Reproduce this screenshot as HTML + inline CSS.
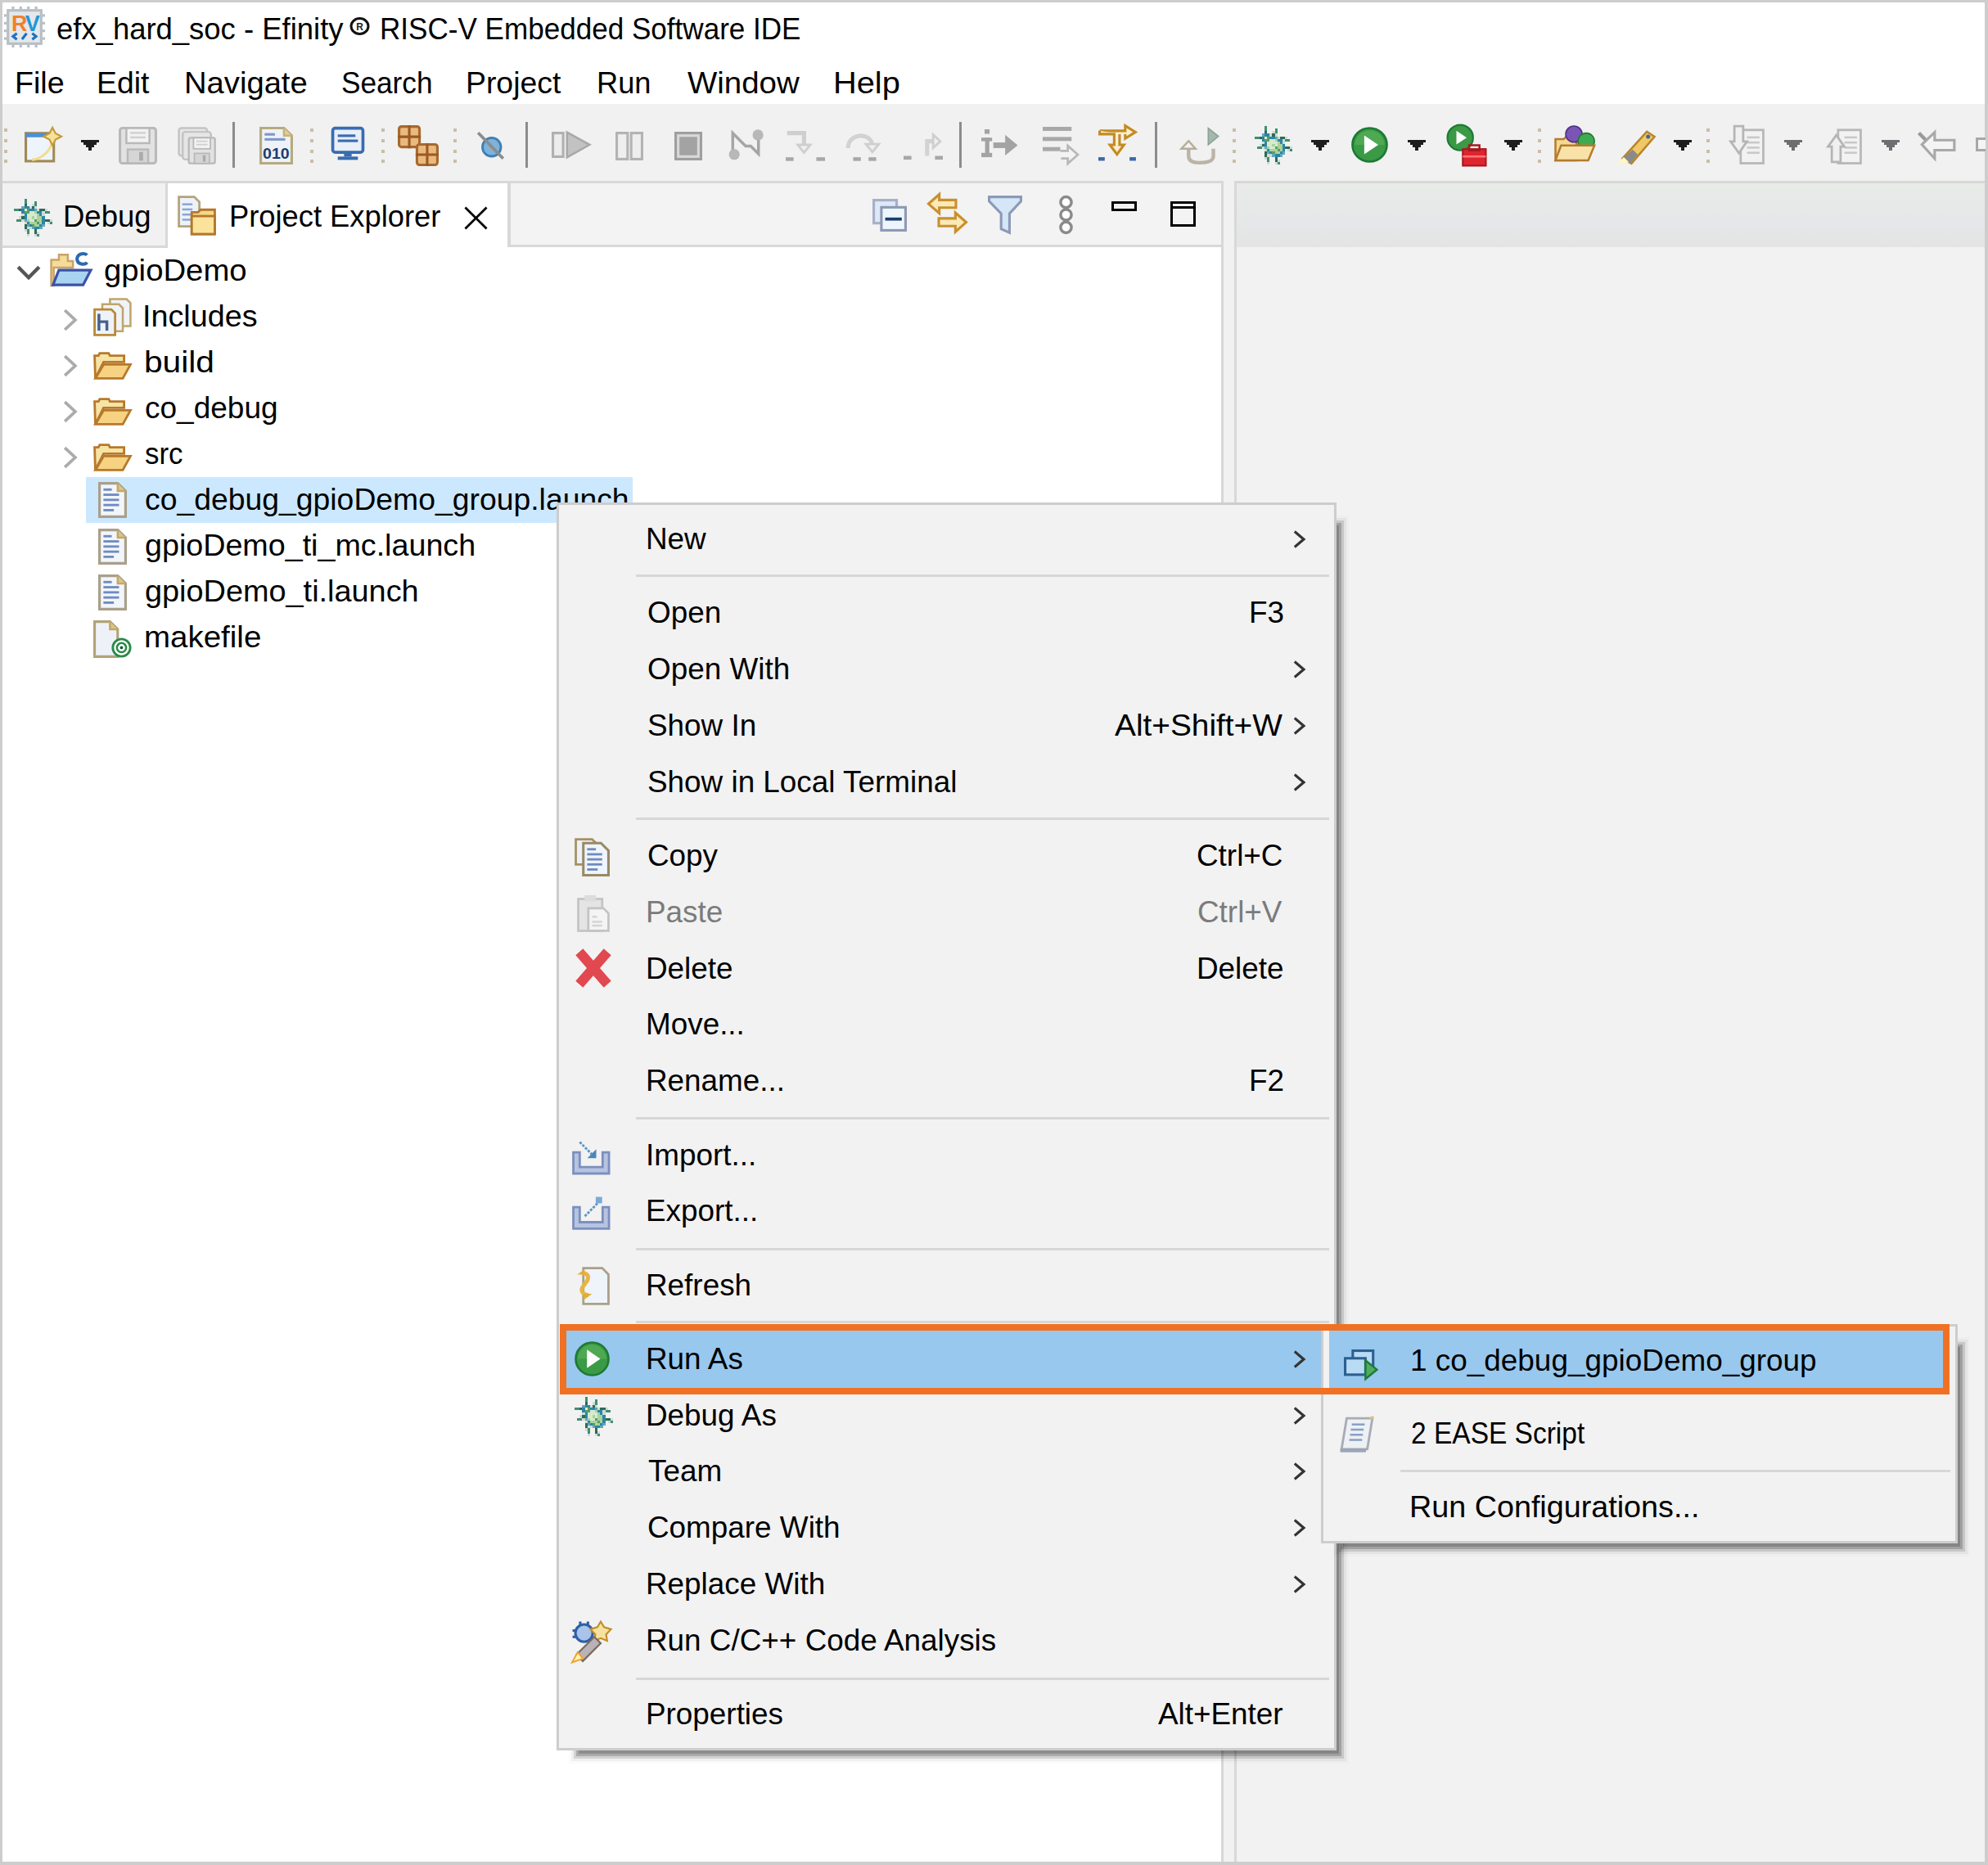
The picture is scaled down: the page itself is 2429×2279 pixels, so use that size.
<!DOCTYPE html>
<html><head><meta charset="utf-8"><style>
html,body{margin:0;padding:0;}
body{width:2429px;height:2279px;position:relative;overflow:hidden;background:#fff;font-family:"Liberation Sans",sans-serif;}
.r{position:absolute;}
.t{position:absolute;font-size:37px;line-height:38px;white-space:pre;transform-origin:0 0;}
svg{position:absolute;overflow:visible;}
</style></head><body>
<!-- window border -->
<div class="r" style="left:0;top:0;width:2429px;height:2279px;box-sizing:border-box;border:3px solid #cdcdcd;border-right-width:4px;border-bottom-width:4px;"></div>
<!-- toolbar -->
<div class="r" style="left:3px;top:127px;width:2422px;height:94px;background:#f1f1f1"></div>
<!-- gap areas between panels -->
<div class="r" style="left:3px;top:221px;width:2422px;height:2054px;background:#f1f1f1"></div>
<!-- left panel -->
<div class="r" style="left:3px;top:221px;width:1492px;height:2054px;background:#fff;box-sizing:border-box;border-top:3px solid #d8d8d8;border-right:3px solid #d8d8d8"></div>
<div class="r" style="left:3px;top:224px;width:1489px;height:78px;background:#f3f3f3;box-sizing:border-box;border-bottom:3px solid #d8d8d8"></div>
<div class="r" style="left:3px;top:224px;width:202px;height:79px;background:#f1f1f1;box-sizing:border-box;border-right:3px solid #d8d8d8;border-bottom:3px solid #d8d8d8"></div>
<div class="r" style="left:205px;top:224px;width:419px;height:78px;background:#fff;box-sizing:border-box;border-right:4px solid #d8d8d8"></div>
<!-- right panel -->
<div class="r" style="left:1508px;top:221px;width:917px;height:2054px;background:#f2f2f2;box-sizing:border-box;border-top:3px solid #d8d8d8;border-left:3px solid #d8d8d8"></div>
<div class="r" style="left:1511px;top:224px;width:914px;height:78px;background:linear-gradient(#e9ebe9,#e6e7e8 60%,#e4e4e4)"></div>
<!-- tree selection -->
<div class="r" style="left:105px;top:583px;width:668px;height:56px;background:#cce8ff"></div>
<svg style="left:5.0px;top:8.0px" width="50.0" height="50.0" viewBox="0 0 16 16" preserveAspectRatio="none"><rect x="1" y="1" width="14" height="14" fill="#b7bec4" /><rect x="2" y="2" width="12" height="12" fill="#e5e7ea" /><rect x="3" y="0" width="1" height="1" fill="#b7bec4" /><rect x="6" y="0" width="1" height="1" fill="#b7bec4" /><rect x="9" y="0" width="1" height="1" fill="#b7bec4" /><rect x="12" y="0" width="1" height="1" fill="#b7bec4" /><rect x="3" y="15" width="1" height="1" fill="#b7bec4" /><rect x="6" y="15" width="1" height="1" fill="#b7bec4" /><rect x="9" y="15" width="1" height="1" fill="#b7bec4" /><rect x="12" y="15" width="1" height="1" fill="#b7bec4" /><rect x="0" y="3" width="1" height="1" fill="#b7bec4" /><rect x="0" y="6" width="1" height="1" fill="#b7bec4" /><rect x="0" y="9" width="1" height="1" fill="#b7bec4" /><rect x="0" y="12" width="1" height="1" fill="#b7bec4" /><rect x="15" y="3" width="1" height="1" fill="#b7bec4" /><rect x="15" y="6" width="1" height="1" fill="#b7bec4" /><rect x="15" y="9" width="1" height="1" fill="#b7bec4" /><rect x="15" y="12" width="1" height="1" fill="#b7bec4" /><text x="2.9" y="9.7" font-family="Liberation Sans" font-weight="bold" font-size="8.6" fill="#f0812a">R</text><text x="8.2" y="9.7" font-family="Liberation Sans" font-weight="bold" font-size="8.6" fill="#1e98d6">V</text><path d="M5 10.5l-1.5 1.2 1.5 1.2M7 12.8l1.8-2.3M11 10.5l1.5 1.2-1.5 1.2" stroke="#1a72c4" stroke-width="1" fill="none"/></svg>
<div class="r" style="left:5px;top:157px;width:4px;height:4px;background:#c9bea9"></div><div class="r" style="left:5px;top:170px;width:4px;height:4px;background:#c9bea9"></div><div class="r" style="left:5px;top:183px;width:4px;height:4px;background:#c9bea9"></div><div class="r" style="left:5px;top:195px;width:4px;height:4px;background:#c9bea9"></div>
<div class="r" style="left:379px;top:157px;width:4px;height:4px;background:#c9bea9"></div><div class="r" style="left:379px;top:170px;width:4px;height:4px;background:#c9bea9"></div><div class="r" style="left:379px;top:183px;width:4px;height:4px;background:#c9bea9"></div><div class="r" style="left:379px;top:195px;width:4px;height:4px;background:#c9bea9"></div>
<div class="r" style="left:466px;top:157px;width:4px;height:4px;background:#c9bea9"></div><div class="r" style="left:466px;top:170px;width:4px;height:4px;background:#c9bea9"></div><div class="r" style="left:466px;top:183px;width:4px;height:4px;background:#c9bea9"></div><div class="r" style="left:466px;top:195px;width:4px;height:4px;background:#c9bea9"></div>
<div class="r" style="left:554px;top:157px;width:4px;height:4px;background:#c9bea9"></div><div class="r" style="left:554px;top:170px;width:4px;height:4px;background:#c9bea9"></div><div class="r" style="left:554px;top:183px;width:4px;height:4px;background:#c9bea9"></div><div class="r" style="left:554px;top:195px;width:4px;height:4px;background:#c9bea9"></div>
<div class="r" style="left:1506px;top:157px;width:4px;height:4px;background:#c9bea9"></div><div class="r" style="left:1506px;top:170px;width:4px;height:4px;background:#c9bea9"></div><div class="r" style="left:1506px;top:183px;width:4px;height:4px;background:#c9bea9"></div><div class="r" style="left:1506px;top:195px;width:4px;height:4px;background:#c9bea9"></div>
<div class="r" style="left:1879px;top:157px;width:4px;height:4px;background:#c9bea9"></div><div class="r" style="left:1879px;top:170px;width:4px;height:4px;background:#c9bea9"></div><div class="r" style="left:1879px;top:183px;width:4px;height:4px;background:#c9bea9"></div><div class="r" style="left:1879px;top:195px;width:4px;height:4px;background:#c9bea9"></div>
<div class="r" style="left:2085px;top:157px;width:4px;height:4px;background:#c9bea9"></div><div class="r" style="left:2085px;top:170px;width:4px;height:4px;background:#c9bea9"></div><div class="r" style="left:2085px;top:183px;width:4px;height:4px;background:#c9bea9"></div><div class="r" style="left:2085px;top:195px;width:4px;height:4px;background:#c9bea9"></div>
<div class="r" style="left:284px;top:149px;width:3px;height:56px;background:#8c8c8c"></div>
<div class="r" style="left:642px;top:149px;width:3px;height:56px;background:#8c8c8c"></div>
<div class="r" style="left:1172px;top:149px;width:3px;height:56px;background:#8c8c8c"></div>
<div class="r" style="left:1411px;top:149px;width:3px;height:56px;background:#8c8c8c"></div>
<svg style="left:99px;top:171px" width="22" height="12.6" viewBox="0 0 7 4" shape-rendering="crispEdges"><rect x="0" y="0" width="7" height="1" fill="#1e1e1e"/><rect x="1" y="1" width="5" height="1" fill="#1e1e1e"/><rect x="2" y="2" width="3" height="1" fill="#1e1e1e"/><rect x="3" y="3" width="1" height="1" fill="#1e1e1e"/></svg>
<svg style="left:1602px;top:171px" width="22" height="12.6" viewBox="0 0 7 4" shape-rendering="crispEdges"><rect x="0" y="0" width="7" height="1" fill="#1e1e1e"/><rect x="1" y="1" width="5" height="1" fill="#1e1e1e"/><rect x="2" y="2" width="3" height="1" fill="#1e1e1e"/><rect x="3" y="3" width="1" height="1" fill="#1e1e1e"/></svg>
<svg style="left:1720px;top:171px" width="22" height="12.6" viewBox="0 0 7 4" shape-rendering="crispEdges"><rect x="0" y="0" width="7" height="1" fill="#1e1e1e"/><rect x="1" y="1" width="5" height="1" fill="#1e1e1e"/><rect x="2" y="2" width="3" height="1" fill="#1e1e1e"/><rect x="3" y="3" width="1" height="1" fill="#1e1e1e"/></svg>
<svg style="left:1838px;top:171px" width="22" height="12.6" viewBox="0 0 7 4" shape-rendering="crispEdges"><rect x="0" y="0" width="7" height="1" fill="#1e1e1e"/><rect x="1" y="1" width="5" height="1" fill="#1e1e1e"/><rect x="2" y="2" width="3" height="1" fill="#1e1e1e"/><rect x="3" y="3" width="1" height="1" fill="#1e1e1e"/></svg>
<svg style="left:2045px;top:171px" width="22" height="12.6" viewBox="0 0 7 4" shape-rendering="crispEdges"><rect x="0" y="0" width="7" height="1" fill="#1e1e1e"/><rect x="1" y="1" width="5" height="1" fill="#1e1e1e"/><rect x="2" y="2" width="3" height="1" fill="#1e1e1e"/><rect x="3" y="3" width="1" height="1" fill="#1e1e1e"/></svg>
<svg style="left:2180px;top:171px" width="22" height="12.6" viewBox="0 0 7 4" shape-rendering="crispEdges"><rect x="0" y="0" width="7" height="1" fill="#6e6e72"/><rect x="1" y="1" width="5" height="1" fill="#6e6e72"/><rect x="2" y="2" width="3" height="1" fill="#6e6e72"/><rect x="3" y="3" width="1" height="1" fill="#6e6e72"/></svg>
<svg style="left:2299px;top:171px" width="22" height="12.6" viewBox="0 0 7 4" shape-rendering="crispEdges"><rect x="0" y="0" width="7" height="1" fill="#6e6e72"/><rect x="1" y="1" width="5" height="1" fill="#6e6e72"/><rect x="2" y="2" width="3" height="1" fill="#6e6e72"/><rect x="3" y="3" width="1" height="1" fill="#6e6e72"/></svg>
<svg style="left:30.0px;top:155.0px" width="45.0" height="45.0" viewBox="0 0 14.5 14.5" preserveAspectRatio="none"><rect x="0.5" y="2.5" width="11" height="11" fill="#eef4fb" stroke="#a08a55" stroke-width="1"/><rect x="0.5" y="2.5" width="11" height="1.6" fill="#4a90d9" /><path d="M3 13 Q9 12 11 6" stroke="#f3dc8a" stroke-width="1" fill="none"/><path d="M11 0.3l1.2 2.3 2.3 1.2-2.3 1.2-1.2 2.3-1.2-2.3-2.3-1.2 2.3-1.2z" fill="#f7e29a" stroke="#c39a3a" stroke-width="0.7"/></svg>
<svg style="left:145.0px;top:155.0px" width="47.0" height="46.0" viewBox="0 0 15 15" preserveAspectRatio="none"><rect x="0.5" y="0.5" width="14" height="14" rx="1" fill="#e2e2e2" stroke="#b9b9b9" stroke-width="1"/><rect x="3" y="0.5" width="9" height="6" fill="#f2f2f2" stroke="#b9b9b9" stroke-width="0.8"/><rect x="4.5" y="2" width="6" height="0.8" fill="#d0d0d0"/><rect x="4.5" y="3.8" width="6" height="0.8" fill="#d0d0d0"/><rect x="3.5" y="9" width="8" height="5.5" fill="#d5d5d5" stroke="#b9b9b9" stroke-width="0.8"/><rect x="8" y="10" width="1.5" height="3.5" fill="#aaa"/></svg>
<svg style="left:217.0px;top:155.0px" width="47.0" height="46.0" viewBox="0 0 15 15" preserveAspectRatio="none"><rect x="0.5" y="0.5" width="11" height="11" rx="1" fill="#e6e6e6" stroke="#c4c4c4" stroke-width="0.8"/><rect x="2" y="2" width="11" height="11" rx="1" fill="#e6e6e6" stroke="#c4c4c4" stroke-width="0.8"/><g transform="translate(4,4) scale(0.73)"><rect x="0.5" y="0.5" width="14" height="14" rx="1" fill="#e2e2e2" stroke="#b9b9b9" stroke-width="1"/><rect x="3" y="0.5" width="9" height="6" fill="#f2f2f2" stroke="#b9b9b9" stroke-width="0.8"/><rect x="4.5" y="2" width="6" height="0.8" fill="#d0d0d0"/><rect x="4.5" y="3.8" width="6" height="0.8" fill="#d0d0d0"/><rect x="3.5" y="9" width="8" height="5.5" fill="#d5d5d5" stroke="#b9b9b9" stroke-width="0.8"/><rect x="8" y="10" width="1.5" height="3.5" fill="#aaa"/></g></svg>
<svg style="left:317.0px;top:155.0px" width="41.0" height="46.0" viewBox="0 0 13 15" preserveAspectRatio="none"><path d="M0.5 0.5H9.5L12.5 3.5V14.5H0.5Z" fill="#eef2f8" stroke="#b8aa80" stroke-width="1"/><path d="M9.5 0.5V3.5H12.5" fill="#e3cf94" stroke="#c8b27a" stroke-width="0.8"/><rect x="2" y="2.5" width="4" height="1" fill="#7e97c8" /><rect x="2" y="4.5" width="8" height="1" fill="#7e97c8" /><text x="1.3" y="12.6" font-family="Liberation Sans" font-weight="bold" font-size="6.2" fill="#1f3b6e">010</text></svg>
<svg style="left:405.0px;top:155.0px" width="40.0" height="41.0" viewBox="0 0 13 13.2" preserveAspectRatio="none"><rect x="0.5" y="0.5" width="12" height="9.5" rx="1" fill="#e9eef7" stroke="#3a6cb0" stroke-width="1.2"/><rect x="2.5" y="3" width="7" height="1" fill="#3a6cb0" /><rect x="2.5" y="5" width="8" height="1" fill="#3a6cb0" /><rect x="5" y="10.5" width="3" height="1.2" fill="#3a6cb0" /><rect x="2.5" y="11.7" width="8" height="1.3" fill="#3a6cb0" /></svg>
<svg style="left:486.0px;top:153.0px" width="50.0" height="50.0" viewBox="0 0 16 16" preserveAspectRatio="none"><rect x="0.5" y="0.5" width="8" height="8" rx="1" fill="#e9b97e" stroke="#a8682e" stroke-width="1"/><path d="M4.5 0 v9 M0 4.5 h9" stroke="#9a5a22" stroke-width="1"/><rect x="7.5" y="7.5" width="8" height="8" rx="1" fill="#e9b97e" stroke="#a8682e" stroke-width="1"/><path d="M11.5 7 v9 M7 11.5 h9" stroke="#9a5a22" stroke-width="1"/></svg>
<svg style="left:582.0px;top:160.0px" width="35.0" height="36.0" viewBox="0 0 11.2 11.5" preserveAspectRatio="none"><circle cx="6" cy="6.3" r="3.6" fill="#7fb2d8" stroke="#3d7fb5" stroke-width="0.9"/><path d="M0.7 0.7L10.5 10.8" stroke="#8c8c8c" stroke-width="1.2"/></svg>
<svg style="left:674.0px;top:161.0px" width="47.0" height="32.0" viewBox="0 0 15 10.3" preserveAspectRatio="none"><rect x="0.5" y="0.5" width="4" height="9.3" fill="#ececec" stroke="#b0b0b0" stroke-width="1"/><path d="M6 0.2L14.8 5.1L6 10.1Z" fill="#c2c2c2" stroke="#a8a8a8" stroke-width="0.8"/></svg>
<svg style="left:752.0px;top:161.0px" width="34.0" height="35.0" viewBox="0 0 11 11.2" preserveAspectRatio="none"><rect x="0.5" y="0.5" width="4.3" height="10.2" fill="#eeeeee" stroke="#b3b3b3" stroke-width="1"/><rect x="6.2" y="0.5" width="4.3" height="10.2" fill="#eeeeee" stroke="#b3b3b3" stroke-width="1"/></svg>
<svg style="left:824.0px;top:161.0px" width="34.0" height="35.0" viewBox="0 0 11 11.2" preserveAspectRatio="none"><rect x="0.5" y="0.5" width="10" height="10.2" fill="#d9d9d9" stroke="#9f9f9f" stroke-width="1"/><rect x="2" y="2" width="7" height="7.2" fill="#a3a3a3" /></svg>
<svg style="left:889.0px;top:158.0px" width="44.0" height="38.0" viewBox="0 0 14 12" preserveAspectRatio="none"><path d="M2 10V1.5L7 6.5H9L12 9.5V2" stroke="#a5a5a5" stroke-width="1.1" fill="none"/><circle cx="2.6" cy="9.7" r="2.1" fill="#b8b8b8"/><circle cx="11.8" cy="2.2" r="2.1" fill="#b8b8b8"/></svg>
<svg style="left:960.0px;top:160.0px" width="48.0" height="37.0" viewBox="0 0 15 11.5" preserveAspectRatio="none"><path d="M0.5 0.8H7V6.5" stroke="#cfcfcf" stroke-width="1.6" fill="none"/><path d="M4.6 5.3H9.4L7 8.2Z" fill="#f0f0f0" stroke="#cfcfcf" stroke-width="0.9"/><rect x="0" y="10" width="3" height="1.4" fill="#a7a7a7" /><rect x="11.7" y="10" width="3.3" height="1.4" fill="#a7a7a7" /></svg>
<svg style="left:1033.0px;top:160.0px" width="47.0" height="37.0" viewBox="0 0 15 11.5" preserveAspectRatio="none"><path d="M1 6.5C1 1 9.5 0 10.5 5.3" stroke="#d2d2d2" stroke-width="1.6" fill="none"/><path d="M8 5H13L10.5 8Z" fill="#f0f0f0" stroke="#cfcfcf" stroke-width="0.9"/><rect x="3" y="10" width="3" height="1.4" fill="#a7a7a7" /><rect x="9" y="10" width="3" height="1.4" fill="#a7a7a7" /></svg>
<svg style="left:1104.0px;top:158.0px" width="48.0" height="39.0" viewBox="0 0 15 12" preserveAspectRatio="none"><path d="M9 10V4.5H12" stroke="#d2d2d2" stroke-width="1.6" fill="none"/><path d="M11.3 2L14 4.5L11.3 7Z" fill="#f0f0f0" stroke="#cfcfcf" stroke-width="0.9"/><rect x="0" y="10" width="3" height="1.4" fill="#a7a7a7" /><rect x="12" y="10" width="3" height="1.4" fill="#a7a7a7" /></svg>
<svg style="left:1199.0px;top:158.0px" width="46.0" height="35.0" viewBox="0 0 15 11.3" preserveAspectRatio="none"><rect x="1.3" y="0" width="2" height="1.8" fill="#a3a3a3" /><rect x="0" y="3.3" width="4.3" height="1.4" fill="#a3a3a3" /><rect x="1.5" y="3.3" width="1.7" height="7" fill="#a3a3a3" /><rect x="0" y="9.3" width="4.3" height="1.7" fill="#a3a3a3" /><rect x="4.8" y="5.2" width="5" height="2.2" fill="#a3a3a3" /><path d="M9.5 2.2L14.5 6.3L9.5 10.3Z" fill="#a3a3a3"/></svg>
<svg style="left:1274.0px;top:155.0px" width="46.0" height="47.0" viewBox="0 0 15 15.2" preserveAspectRatio="none"><rect x="0" y="0" width="11.5" height="1.6" fill="#a8a8a8" /><rect x="0" y="4" width="11.5" height="1.6" fill="#a8a8a8" /><rect x="0" y="8" width="7" height="1.6" fill="#a8a8a8" /><path d="M7 9.5H10V7.5L14 11L10 14.5V12.5H7.3" fill="#f3f3f3" stroke="#b8b8b8" stroke-width="0.9"/></svg>
<svg style="left:1342.0px;top:152.0px" width="50.0" height="46.0" viewBox="0 0 16 14.7" preserveAspectRatio="none"><path d="M0.5 2.5H10.5V0.5L14.5 3L10.5 5.5V3.8" fill="#fbeecc" stroke="#c48b22" stroke-width="1"/><path d="M0.5 2.5V3.8H6.2V8H4.5L7.3 11.7L10 8H8.3V3.8" fill="#fbeecc" stroke="#c48b22" stroke-width="1"/><rect x="0" y="12.8" width="2.5" height="1.4" fill="#3d6aa8" /><rect x="12.2" y="12.8" width="2.5" height="1.4" fill="#3d6aa8" /></svg>
<svg style="left:1442.0px;top:155.0px" width="48.0" height="47.0" viewBox="0 0 15.4 15" preserveAspectRatio="none"><path d="M11 0.5L15 3.7L11 7Z" fill="#a5b8ad" stroke="#8aa294" stroke-width="0.5"/><path d="M3.3 7.5V11.5C3.3 13.5 5 14 7.5 14S13 13.5 13 11.5V8.5" stroke="#bbb4a6" stroke-width="1.4" fill="none"/><path d="M0.5 8.5L3.3 5.5L6 8.5Z" fill="#f4f2ec" stroke="#b6ae9c" stroke-width="0.8"/></svg>
<svg style="left:1533.0px;top:154.0px" width="46.0" height="47.0" viewBox="0 0 15 15" preserveAspectRatio="none"><g shape-rendering="crispEdges"><rect x="4" y="0" width="1.02" height="1.02" fill="#3f8f70"/><rect x="4" y="1" width="1.02" height="1.02" fill="#3f8f70"/><rect x="8" y="1" width="1.02" height="1.02" fill="#3f8f70"/><rect x="4" y="2" width="1.02" height="1.02" fill="#2f6a52"/><rect x="7" y="2" width="1.02" height="1.02" fill="#cfdcd6"/><rect x="8" y="2" width="1.02" height="1.02" fill="#3f8f70"/><rect x="3" y="3" width="1.02" height="1.02" fill="#62a6bd"/><rect x="4" y="3" width="1.02" height="1.02" fill="#2b86a6"/><rect x="5" y="3" width="1.02" height="1.02" fill="#2b86a6"/><rect x="6" y="3" width="1.02" height="1.02" fill="#cfdcd6"/><rect x="7" y="3" width="1.02" height="1.02" fill="#2f6a52"/><rect x="8" y="3" width="1.02" height="1.02" fill="#cfdcd6"/><rect x="0" y="4" width="1.02" height="1.02" fill="#3f8f70"/><rect x="1" y="4" width="1.02" height="1.02" fill="#3f8f70"/><rect x="2" y="4" width="1.02" height="1.02" fill="#2f6a52"/><rect x="3" y="4" width="1.02" height="1.02" fill="#2b86a6"/><rect x="4" y="4" width="1.02" height="1.02" fill="#e6f3c8"/><rect x="5" y="4" width="1.02" height="1.02" fill="#5c9c62"/><rect x="6" y="4" width="1.02" height="1.02" fill="#2b86a6"/><rect x="7" y="4" width="1.02" height="1.02" fill="#2b86a6"/><rect x="8" y="4" width="1.02" height="1.02" fill="#62a6bd"/><rect x="9" y="4" width="1.02" height="1.02" fill="#cfdcd6"/><rect x="10" y="4" width="1.02" height="1.02" fill="#2f6a52"/><rect x="11" y="4" width="1.02" height="1.02" fill="#2f6a52"/><rect x="12" y="4" width="1.02" height="1.02" fill="#cfdcd6"/><rect x="3" y="5" width="1.02" height="1.02" fill="#2b86a6"/><rect x="4" y="5" width="1.02" height="1.02" fill="#5c9c62"/><rect x="5" y="5" width="1.02" height="1.02" fill="#5c9c62"/><rect x="6" y="5" width="1.02" height="1.02" fill="#d6ead0"/><rect x="7" y="5" width="1.02" height="1.02" fill="#d6ead0"/><rect x="8" y="5" width="1.02" height="1.02" fill="#a9d29c"/><rect x="9" y="5" width="1.02" height="1.02" fill="#2b86a6"/><rect x="10" y="5" width="1.02" height="1.02" fill="#2b86a6"/><rect x="11" y="5" width="1.02" height="1.02" fill="#cfdcd6"/><rect x="12" y="5" width="1.02" height="1.02" fill="#3f8f70"/><rect x="13" y="5" width="1.02" height="1.02" fill="#3f8f70"/><rect x="3" y="6" width="1.02" height="1.02" fill="#cfdcd6"/><rect x="4" y="6" width="1.02" height="1.02" fill="#2b86a6"/><rect x="5" y="6" width="1.02" height="1.02" fill="#d6ead0"/><rect x="6" y="6" width="1.02" height="1.02" fill="#d6ead0"/><rect x="7" y="6" width="1.02" height="1.02" fill="#d6ead0"/><rect x="8" y="6" width="1.02" height="1.02" fill="#d6ead0"/><rect x="9" y="6" width="1.02" height="1.02" fill="#a9d29c"/><rect x="10" y="6" width="1.02" height="1.02" fill="#2b86a6"/><rect x="11" y="6" width="1.02" height="1.02" fill="#cfdcd6"/><rect x="2" y="7" width="1.02" height="1.02" fill="#cfdcd6"/><rect x="3" y="7" width="1.02" height="1.02" fill="#2f6a52"/><rect x="4" y="7" width="1.02" height="1.02" fill="#2b86a6"/><rect x="5" y="7" width="1.02" height="1.02" fill="#d6ead0"/><rect x="6" y="7" width="1.02" height="1.02" fill="#d6ead0"/><rect x="7" y="7" width="1.02" height="1.02" fill="#a9d29c"/><rect x="8" y="7" width="1.02" height="1.02" fill="#d6ead0"/><rect x="9" y="7" width="1.02" height="1.02" fill="#a9d29c"/><rect x="10" y="7" width="1.02" height="1.02" fill="#a9d29c"/><rect x="11" y="7" width="1.02" height="1.02" fill="#2b86a6"/><rect x="1" y="8" width="1.02" height="1.02" fill="#3f8f70"/><rect x="2" y="8" width="1.02" height="1.02" fill="#3f8f70"/><rect x="3" y="8" width="1.02" height="1.02" fill="#cfdcd6"/><rect x="4" y="8" width="1.02" height="1.02" fill="#62a6bd"/><rect x="5" y="8" width="1.02" height="1.02" fill="#a9d29c"/><rect x="6" y="8" width="1.02" height="1.02" fill="#d6ead0"/><rect x="7" y="8" width="1.02" height="1.02" fill="#d6ead0"/><rect x="8" y="8" width="1.02" height="1.02" fill="#5c9c62"/><rect x="9" y="8" width="1.02" height="1.02" fill="#a9d29c"/><rect x="10" y="8" width="1.02" height="1.02" fill="#a9d29c"/><rect x="11" y="8" width="1.02" height="1.02" fill="#2b86a6"/><rect x="12" y="8" width="1.02" height="1.02" fill="#2f6a52"/><rect x="13" y="8" width="1.02" height="1.02" fill="#2f6a52"/><rect x="14" y="8" width="1.02" height="1.02" fill="#cfdcd6"/><rect x="4" y="9" width="1.02" height="1.02" fill="#cfdcd6"/><rect x="5" y="9" width="1.02" height="1.02" fill="#2b86a6"/><rect x="6" y="9" width="1.02" height="1.02" fill="#a9d29c"/><rect x="7" y="9" width="1.02" height="1.02" fill="#a9d29c"/><rect x="8" y="9" width="1.02" height="1.02" fill="#a9d29c"/><rect x="9" y="9" width="1.02" height="1.02" fill="#5c9c62"/><rect x="10" y="9" width="1.02" height="1.02" fill="#a9d29c"/><rect x="11" y="9" width="1.02" height="1.02" fill="#2b86a6"/><rect x="13" y="9" width="1.02" height="1.02" fill="#cfdcd6"/><rect x="14" y="9" width="1.02" height="1.02" fill="#3f8f70"/><rect x="4" y="10" width="1.02" height="1.02" fill="#2f6a52"/><rect x="5" y="10" width="1.02" height="1.02" fill="#62a6bd"/><rect x="6" y="10" width="1.02" height="1.02" fill="#2b86a6"/><rect x="7" y="10" width="1.02" height="1.02" fill="#5c9c62"/><rect x="8" y="10" width="1.02" height="1.02" fill="#a9d29c"/><rect x="9" y="10" width="1.02" height="1.02" fill="#a9d29c"/><rect x="10" y="10" width="1.02" height="1.02" fill="#2b86a6"/><rect x="11" y="10" width="1.02" height="1.02" fill="#62a6bd"/><rect x="4" y="11" width="1.02" height="1.02" fill="#2f6a52"/><rect x="5" y="11" width="1.02" height="1.02" fill="#cfdcd6"/><rect x="6" y="11" width="1.02" height="1.02" fill="#cfdcd6"/><rect x="7" y="11" width="1.02" height="1.02" fill="#62a6bd"/><rect x="8" y="11" width="1.02" height="1.02" fill="#2b86a6"/><rect x="9" y="11" width="1.02" height="1.02" fill="#2b86a6"/><rect x="10" y="11" width="1.02" height="1.02" fill="#62a6bd"/><rect x="4" y="12" width="1.02" height="1.02" fill="#cfdcd6"/><rect x="5" y="12" width="1.02" height="1.02" fill="#3f8f70"/><rect x="8" y="12" width="1.02" height="1.02" fill="#2f6a52"/><rect x="5" y="13" width="1.02" height="1.02" fill="#3f8f70"/><rect x="8" y="13" width="1.02" height="1.02" fill="#2f6a52"/><rect x="9" y="13" width="1.02" height="1.02" fill="#cfdcd6"/><rect x="5" y="14" width="1.02" height="1.02" fill="#cfdcd6"/><rect x="8" y="14" width="1.02" height="1.02" fill="#cfdcd6"/><rect x="9" y="14" width="1.02" height="1.02" fill="#3f8f70"/></g></svg>
<svg style="left:1651.0px;top:155.0px" width="45.0" height="44.0" viewBox="0 0 15 15" preserveAspectRatio="none"><circle cx="7.5" cy="7.5" r="7" fill="#3a9a45" stroke="#1c7a34" stroke-width="0.9"/><path d="M1.5 7.5A6 6 0 0 1 13.5 7.5" fill="#5cb45c" opacity="0.6"/><path d="M5.3 3.6L11 7.5L5.3 11.4Z" fill="#fff"/></svg>
<svg style="left:1767.0px;top:151.0px" width="50.0" height="53.0" viewBox="0 0 16 17" preserveAspectRatio="none"><circle cx="5.5" cy="5.5" r="5" fill="#3a9a45" stroke="#1c7a34" stroke-width="0.7"/><path d="M4 2.8L8 5.5L4 8.2Z" fill="#fff"/><rect x="6.5" y="10" width="9" height="6.5" fill="#e0242e" stroke="#a71a20" stroke-width="0.7"/><rect x="9" y="8.5" width="4" height="2" fill="none" stroke="#a71a20" stroke-width="0.8"/><rect x="6.5" y="12.5" width="9" height="0.8" fill="#f77" /></svg>
<svg style="left:1898.0px;top:153.0px" width="52.0" height="46.0" viewBox="0 0 16.6 14.8" preserveAspectRatio="none"><path d="M0.8 5.5H4L5 4.5H9V13.8H0.8Z" fill="#f5d894" stroke="#b57b2c" stroke-width="0.8"/><circle cx="8" cy="3.5" r="3.2" fill="#7b55b6" stroke="#4d2f86" stroke-width="0.5"/><circle cx="12.8" cy="6.3" r="3.2" fill="#3faa4f" stroke="#1f7a33" stroke-width="0.5"/><path d="M0.8 13.8L3 8H16L13.6 13.8Z" fill="#f8e2a8" stroke="#b57b2c" stroke-width="0.8"/></svg>
<svg style="left:1973.0px;top:153.0px" width="52.0" height="50.0" viewBox="0 0 16.6 16" preserveAspectRatio="none"><path d="M3 13L12.5 2.5L15.5 4.5L6.5 15Z" fill="#f0c865" stroke="#b98528" stroke-width="0.8"/><path d="M3.5 12.5L7 9.5L9 11.5L6 15Z" fill="#8a8a8a"/><circle cx="13" cy="4.5" r="0.8" fill="#3a66a8"/><path d="M0.5 15.5L3.5 12.5L5.5 14.5Z" fill="#fff6c8"/></svg>
<svg style="left:2113.0px;top:151.0px" width="43.0" height="51.0" viewBox="0 0 14 16.3" preserveAspectRatio="none"><rect x="4.5" y="2.5" width="9" height="13" fill="#f2f2f2" stroke="#b8b8b8" stroke-width="0.9"/><rect x="7" y="5" width="5" height="0.8" fill="#c8c8c8" /><rect x="7" y="7" width="5" height="0.8" fill="#c8c8c8" /><rect x="7" y="9" width="5" height="0.8" fill="#c8c8c8" /><rect x="7" y="11" width="5" height="0.8" fill="#c8c8c8" /><path d="M2 1V7H0.5L3.8 11.5L7 7H5.5V1Z" fill="#f0f0f0" stroke="#b5b5b5" stroke-width="0.9"/></svg>
<svg style="left:2232.0px;top:151.0px" width="43.0" height="51.0" viewBox="0 0 14 16.3" preserveAspectRatio="none"><rect x="4.5" y="2.5" width="9" height="13" fill="#f2f2f2" stroke="#b8b8b8" stroke-width="0.9"/><rect x="7" y="5" width="5" height="0.8" fill="#c8c8c8" /><rect x="7" y="7" width="5" height="0.8" fill="#c8c8c8" /><rect x="7" y="9" width="5" height="0.8" fill="#c8c8c8" /><rect x="7" y="11" width="5" height="0.8" fill="#c8c8c8" /><path d="M2 15V9H0.5L3.8 4.5L7 9H5.5V15Z" fill="#f0f0f0" stroke="#b5b5b5" stroke-width="0.9"/></svg>
<svg style="left:2342.0px;top:160.0px" width="49.0" height="36.0" viewBox="0 0 15.7 11.5" preserveAspectRatio="none"><path d="M0.8 0.8L3.5 3.5" stroke="#999" stroke-width="1.4"/><path d="M7 0.5L2 5.3L7 10.8V7.5H14.7V3.6H7Z" fill="#f4f4f4" stroke="#a8a8a8" stroke-width="1"/></svg>
<div class="r" style="left:2414px;top:168px;width:12px;height:17px;box-sizing:border-box;border:3px solid #a8a8a8;border-right:none;background:#f4f4f4"></div>
<svg style="left:17.0px;top:243.0px" width="47.0" height="46.0" viewBox="0 0 15 15" preserveAspectRatio="none"><g shape-rendering="crispEdges"><rect x="4" y="0" width="1.02" height="1.02" fill="#3f8f70"/><rect x="4" y="1" width="1.02" height="1.02" fill="#3f8f70"/><rect x="8" y="1" width="1.02" height="1.02" fill="#3f8f70"/><rect x="4" y="2" width="1.02" height="1.02" fill="#2f6a52"/><rect x="7" y="2" width="1.02" height="1.02" fill="#cfdcd6"/><rect x="8" y="2" width="1.02" height="1.02" fill="#3f8f70"/><rect x="3" y="3" width="1.02" height="1.02" fill="#62a6bd"/><rect x="4" y="3" width="1.02" height="1.02" fill="#2b86a6"/><rect x="5" y="3" width="1.02" height="1.02" fill="#2b86a6"/><rect x="6" y="3" width="1.02" height="1.02" fill="#cfdcd6"/><rect x="7" y="3" width="1.02" height="1.02" fill="#2f6a52"/><rect x="8" y="3" width="1.02" height="1.02" fill="#cfdcd6"/><rect x="0" y="4" width="1.02" height="1.02" fill="#3f8f70"/><rect x="1" y="4" width="1.02" height="1.02" fill="#3f8f70"/><rect x="2" y="4" width="1.02" height="1.02" fill="#2f6a52"/><rect x="3" y="4" width="1.02" height="1.02" fill="#2b86a6"/><rect x="4" y="4" width="1.02" height="1.02" fill="#e6f3c8"/><rect x="5" y="4" width="1.02" height="1.02" fill="#5c9c62"/><rect x="6" y="4" width="1.02" height="1.02" fill="#2b86a6"/><rect x="7" y="4" width="1.02" height="1.02" fill="#2b86a6"/><rect x="8" y="4" width="1.02" height="1.02" fill="#62a6bd"/><rect x="9" y="4" width="1.02" height="1.02" fill="#cfdcd6"/><rect x="10" y="4" width="1.02" height="1.02" fill="#2f6a52"/><rect x="11" y="4" width="1.02" height="1.02" fill="#2f6a52"/><rect x="12" y="4" width="1.02" height="1.02" fill="#cfdcd6"/><rect x="3" y="5" width="1.02" height="1.02" fill="#2b86a6"/><rect x="4" y="5" width="1.02" height="1.02" fill="#5c9c62"/><rect x="5" y="5" width="1.02" height="1.02" fill="#5c9c62"/><rect x="6" y="5" width="1.02" height="1.02" fill="#d6ead0"/><rect x="7" y="5" width="1.02" height="1.02" fill="#d6ead0"/><rect x="8" y="5" width="1.02" height="1.02" fill="#a9d29c"/><rect x="9" y="5" width="1.02" height="1.02" fill="#2b86a6"/><rect x="10" y="5" width="1.02" height="1.02" fill="#2b86a6"/><rect x="11" y="5" width="1.02" height="1.02" fill="#cfdcd6"/><rect x="12" y="5" width="1.02" height="1.02" fill="#3f8f70"/><rect x="13" y="5" width="1.02" height="1.02" fill="#3f8f70"/><rect x="3" y="6" width="1.02" height="1.02" fill="#cfdcd6"/><rect x="4" y="6" width="1.02" height="1.02" fill="#2b86a6"/><rect x="5" y="6" width="1.02" height="1.02" fill="#d6ead0"/><rect x="6" y="6" width="1.02" height="1.02" fill="#d6ead0"/><rect x="7" y="6" width="1.02" height="1.02" fill="#d6ead0"/><rect x="8" y="6" width="1.02" height="1.02" fill="#d6ead0"/><rect x="9" y="6" width="1.02" height="1.02" fill="#a9d29c"/><rect x="10" y="6" width="1.02" height="1.02" fill="#2b86a6"/><rect x="11" y="6" width="1.02" height="1.02" fill="#cfdcd6"/><rect x="2" y="7" width="1.02" height="1.02" fill="#cfdcd6"/><rect x="3" y="7" width="1.02" height="1.02" fill="#2f6a52"/><rect x="4" y="7" width="1.02" height="1.02" fill="#2b86a6"/><rect x="5" y="7" width="1.02" height="1.02" fill="#d6ead0"/><rect x="6" y="7" width="1.02" height="1.02" fill="#d6ead0"/><rect x="7" y="7" width="1.02" height="1.02" fill="#a9d29c"/><rect x="8" y="7" width="1.02" height="1.02" fill="#d6ead0"/><rect x="9" y="7" width="1.02" height="1.02" fill="#a9d29c"/><rect x="10" y="7" width="1.02" height="1.02" fill="#a9d29c"/><rect x="11" y="7" width="1.02" height="1.02" fill="#2b86a6"/><rect x="1" y="8" width="1.02" height="1.02" fill="#3f8f70"/><rect x="2" y="8" width="1.02" height="1.02" fill="#3f8f70"/><rect x="3" y="8" width="1.02" height="1.02" fill="#cfdcd6"/><rect x="4" y="8" width="1.02" height="1.02" fill="#62a6bd"/><rect x="5" y="8" width="1.02" height="1.02" fill="#a9d29c"/><rect x="6" y="8" width="1.02" height="1.02" fill="#d6ead0"/><rect x="7" y="8" width="1.02" height="1.02" fill="#d6ead0"/><rect x="8" y="8" width="1.02" height="1.02" fill="#5c9c62"/><rect x="9" y="8" width="1.02" height="1.02" fill="#a9d29c"/><rect x="10" y="8" width="1.02" height="1.02" fill="#a9d29c"/><rect x="11" y="8" width="1.02" height="1.02" fill="#2b86a6"/><rect x="12" y="8" width="1.02" height="1.02" fill="#2f6a52"/><rect x="13" y="8" width="1.02" height="1.02" fill="#2f6a52"/><rect x="14" y="8" width="1.02" height="1.02" fill="#cfdcd6"/><rect x="4" y="9" width="1.02" height="1.02" fill="#cfdcd6"/><rect x="5" y="9" width="1.02" height="1.02" fill="#2b86a6"/><rect x="6" y="9" width="1.02" height="1.02" fill="#a9d29c"/><rect x="7" y="9" width="1.02" height="1.02" fill="#a9d29c"/><rect x="8" y="9" width="1.02" height="1.02" fill="#a9d29c"/><rect x="9" y="9" width="1.02" height="1.02" fill="#5c9c62"/><rect x="10" y="9" width="1.02" height="1.02" fill="#a9d29c"/><rect x="11" y="9" width="1.02" height="1.02" fill="#2b86a6"/><rect x="13" y="9" width="1.02" height="1.02" fill="#cfdcd6"/><rect x="14" y="9" width="1.02" height="1.02" fill="#3f8f70"/><rect x="4" y="10" width="1.02" height="1.02" fill="#2f6a52"/><rect x="5" y="10" width="1.02" height="1.02" fill="#62a6bd"/><rect x="6" y="10" width="1.02" height="1.02" fill="#2b86a6"/><rect x="7" y="10" width="1.02" height="1.02" fill="#5c9c62"/><rect x="8" y="10" width="1.02" height="1.02" fill="#a9d29c"/><rect x="9" y="10" width="1.02" height="1.02" fill="#a9d29c"/><rect x="10" y="10" width="1.02" height="1.02" fill="#2b86a6"/><rect x="11" y="10" width="1.02" height="1.02" fill="#62a6bd"/><rect x="4" y="11" width="1.02" height="1.02" fill="#2f6a52"/><rect x="5" y="11" width="1.02" height="1.02" fill="#cfdcd6"/><rect x="6" y="11" width="1.02" height="1.02" fill="#cfdcd6"/><rect x="7" y="11" width="1.02" height="1.02" fill="#62a6bd"/><rect x="8" y="11" width="1.02" height="1.02" fill="#2b86a6"/><rect x="9" y="11" width="1.02" height="1.02" fill="#2b86a6"/><rect x="10" y="11" width="1.02" height="1.02" fill="#62a6bd"/><rect x="4" y="12" width="1.02" height="1.02" fill="#cfdcd6"/><rect x="5" y="12" width="1.02" height="1.02" fill="#3f8f70"/><rect x="8" y="12" width="1.02" height="1.02" fill="#2f6a52"/><rect x="5" y="13" width="1.02" height="1.02" fill="#3f8f70"/><rect x="8" y="13" width="1.02" height="1.02" fill="#2f6a52"/><rect x="9" y="13" width="1.02" height="1.02" fill="#cfdcd6"/><rect x="5" y="14" width="1.02" height="1.02" fill="#cfdcd6"/><rect x="8" y="14" width="1.02" height="1.02" fill="#cfdcd6"/><rect x="9" y="14" width="1.02" height="1.02" fill="#3f8f70"/></g></svg>
<svg style="left:217.0px;top:239.0px" width="47.0" height="47.0" viewBox="0 0 15 15" preserveAspectRatio="none"><path d="M0.5 0.5H6.5L8.5 2.5V12H0.5Z" fill="#eef2f8" stroke="#b3a57c" stroke-width="0.9"/><rect x="1.8" y="3" width="4" height="0.8" fill="#8aa6d6" /><rect x="1.8" y="5" width="4" height="0.8" fill="#8aa6d6" /><rect x="1.8" y="7" width="4" height="0.8" fill="#8aa6d6" /><rect x="1.8" y="9" width="4" height="0.8" fill="#8aa6d6" /><path d="M5.5 8V6.5H8L9 5.5H14.5V15H5.5Z" fill="#f6d886" stroke="#b5772d" stroke-width="0.9"/><rect x="5.5" y="8" width="9" height="7" fill="#fbe39b" stroke="#b5772d" stroke-width="0.9"/></svg>
<svg style="left:567.0px;top:252.0px" width="29.0" height="29.0" viewBox="0 0 10 10" preserveAspectRatio="none"><path d="M0.5 0.5L9.5 9.5M9.5 0.5L0.5 9.5" stroke="#000" stroke-width="0.95"/></svg>
<svg style="left:1066.0px;top:243.0px" width="42.0" height="40.0" viewBox="0 0 13.5 12.8" preserveAspectRatio="none"><rect x="0.5" y="0.5" width="9" height="9" fill="#dde9f7" stroke="#a5b0c8" stroke-width="1"/><rect x="3.5" y="3.3" width="9.5" height="9" fill="#eef5fc" stroke="#8e9ab4" stroke-width="1"/><rect x="5" y="7.3" width="6.5" height="1.2" fill="#1a3e6e" /></svg>
<svg style="left:1132.0px;top:235.0px" width="51.0" height="51.0" viewBox="0 0 16.3 16.3" preserveAspectRatio="none"><path d="M5 0.8L0.8 4.5L5 8.2V6H11.5V3H5Z" fill="#fbe9b8" stroke="#c9902e" stroke-width="1"/><path d="M11.3 8L15.5 11.7L11.3 15.4V13.2H4.8V10.2H11.3Z" fill="#fbe9b8" stroke="#c9902e" stroke-width="1"/></svg>
<svg style="left:1207.0px;top:239.0px" width="42.0" height="47.0" viewBox="0 0 13.5 15" preserveAspectRatio="none"><path d="M0.5 0.5H13V2.2L8.5 7V14.5L5.2 13V7L0.5 2.2Z" fill="#d5e7f7" stroke="#8c9ab8" stroke-width="1"/></svg>
<svg style="left:1294.0px;top:239.0px" width="17.0" height="47.0" viewBox="0 0 5.4 15" preserveAspectRatio="none"><circle cx="2.7" cy="2.6" r="2.1" fill="#fff" stroke="#8a8a8a" stroke-width="1.1"/><circle cx="2.7" cy="7.5" r="2.1" fill="#fff" stroke="#8a8a8a" stroke-width="1.1"/><circle cx="2.7" cy="12.4" r="2.1" fill="#fff" stroke="#8a8a8a" stroke-width="1.1"/></svg>
<div class="r" style="left:1358px;top:246px;width:31px;height:12px;box-sizing:border-box;border:3px solid #000"></div>
<div class="r" style="left:1430px;top:246px;width:31px;height:31px;box-sizing:border-box;border:3px solid #000"></div><div class="r" style="left:1433px;top:252px;width:25px;height:3px;background:#000"></div>
<svg style="left:20.0px;top:324.0px" width="30.0" height="19.0" viewBox="0 0 9.5 6" preserveAspectRatio="none"><path d="M0.7 0.7L4.75 4.8L8.8 0.7" stroke="#555" stroke-width="1.4" fill="none"/></svg>
<svg style="left:61.0px;top:308.0px" width="50.0" height="41.0" viewBox="0 0 16 13" preserveAspectRatio="none"><path d="M0.5 3H3.5V1H7V3.5H9V6H1.5V13H0.5Z" fill="#f6dc98" stroke="#c8a46a" stroke-width="0.8"/><path d="M1.2 12.7L3.5 7H16L13 12.7Z" fill="#a8d4f2" stroke="#3a53a8" stroke-width="1"/><path d="M14.5 1.2C13.8 0.3 10.8 0.3 10.6 2.6C10.6 5 13.8 5 14.5 4" stroke="#2b6ab0" stroke-width="1.3" fill="none"/></svg>
<svg style="left:77.0px;top:377.0px" width="18.0" height="28.0" viewBox="0 0 5.8 9" preserveAspectRatio="none"><path d="M0.7 0.7L4.8 4.5L0.7 8.3" stroke="#ababab" stroke-width="1.2" fill="none"/></svg>
<svg style="left:114.0px;top:364.0px" width="47.0" height="47.0" viewBox="0 0 15 15" preserveAspectRatio="none"><path d="M6.5 0.5H13L14.5 2V11H6.5Z" fill="#f0f3f8" stroke="#c0a56a" stroke-width="0.8"/><path d="M3.5 2.5H10L11.5 4V13H3.5Z" fill="#f0f3f8" stroke="#c0a56a" stroke-width="0.8"/><path d="M0.5 4.5H7L8.5 6V14.5H0.5Z" fill="#eef3fa" stroke="#b88a3a" stroke-width="0.9"/><path d="M2.2 6.2V12.8M2.2 9.3H5.3V12.8" stroke="#46628a" stroke-width="1.1" fill="none"/></svg>
<svg style="left:77.0px;top:433.0px" width="18.0" height="28.0" viewBox="0 0 5.8 9" preserveAspectRatio="none"><path d="M0.7 0.7L4.8 4.5L0.7 8.3" stroke="#ababab" stroke-width="1.2" fill="none"/></svg>
<svg style="left:114.0px;top:430.0px" width="47.0" height="34.0" viewBox="0 0 15 11" preserveAspectRatio="none"><path d="M0.5 1.5H2L2.5 0.5H6L6.5 1.5H12V4H4L0.8 10.5Z" fill="#f6e3a6" stroke="#b8792b" stroke-width="0.9"/><path d="M0.8 10.5L4 5H14.5L11.5 10.5Z" fill="#f7d283" stroke="#b8792b" stroke-width="0.9"/></svg>
<svg style="left:77.0px;top:489.1px" width="18.0" height="28.0" viewBox="0 0 5.8 9" preserveAspectRatio="none"><path d="M0.7 0.7L4.8 4.5L0.7 8.3" stroke="#ababab" stroke-width="1.2" fill="none"/></svg>
<svg style="left:114.0px;top:486.1px" width="47.0" height="34.0" viewBox="0 0 15 11" preserveAspectRatio="none"><path d="M0.5 1.5H2L2.5 0.5H6L6.5 1.5H12V4H4L0.8 10.5Z" fill="#f6e3a6" stroke="#b8792b" stroke-width="0.9"/><path d="M0.8 10.5L4 5H14.5L11.5 10.5Z" fill="#f7d283" stroke="#b8792b" stroke-width="0.9"/></svg>
<svg style="left:77.0px;top:545.2px" width="18.0" height="28.0" viewBox="0 0 5.8 9" preserveAspectRatio="none"><path d="M0.7 0.7L4.8 4.5L0.7 8.3" stroke="#ababab" stroke-width="1.2" fill="none"/></svg>
<svg style="left:114.0px;top:542.2px" width="47.0" height="34.0" viewBox="0 0 15 11" preserveAspectRatio="none"><path d="M0.5 1.5H2L2.5 0.5H6L6.5 1.5H12V4H4L0.8 10.5Z" fill="#f6e3a6" stroke="#b8792b" stroke-width="0.9"/><path d="M0.8 10.5L4 5H14.5L11.5 10.5Z" fill="#f7d283" stroke="#b8792b" stroke-width="0.9"/></svg>
<svg style="left:120.0px;top:589.0px" width="35.0" height="44.0" viewBox="0 0 11 14" preserveAspectRatio="none"><path d="M0.5 0.5H7.5L10.5 3.5V13.5H0.5Z" fill="#f2f5fa" stroke="#a8a08a" stroke-width="1"/><path d="M7.5 0.5V3.5H10.5" fill="#dcc48a" stroke="#c4a866" stroke-width="0.8"/><rect x="2" y="2.5" width="3.2" height="0.9" fill="#6f8bc0" /><rect x="2" y="4.5" width="6" height="0.9" fill="#6f8bc0" /><rect x="2" y="6.5" width="6" height="0.9" fill="#6f8bc0" /><rect x="2" y="8.5" width="6" height="0.9" fill="#6f8bc0" /><rect x="2" y="10.5" width="4" height="0.9" fill="#6f8bc0" /></svg>
<svg style="left:120.0px;top:646.0px" width="35.0" height="44.0" viewBox="0 0 11 14" preserveAspectRatio="none"><path d="M0.5 0.5H7.5L10.5 3.5V13.5H0.5Z" fill="#f2f5fa" stroke="#a8a08a" stroke-width="1"/><path d="M7.5 0.5V3.5H10.5" fill="#dcc48a" stroke="#c4a866" stroke-width="0.8"/><rect x="2" y="2.5" width="3.2" height="0.9" fill="#6f8bc0" /><rect x="2" y="4.5" width="6" height="0.9" fill="#6f8bc0" /><rect x="2" y="6.5" width="6" height="0.9" fill="#6f8bc0" /><rect x="2" y="8.5" width="6" height="0.9" fill="#6f8bc0" /><rect x="2" y="10.5" width="4" height="0.9" fill="#6f8bc0" /></svg>
<svg style="left:120.0px;top:702.0px" width="35.0" height="44.0" viewBox="0 0 11 14" preserveAspectRatio="none"><path d="M0.5 0.5H7.5L10.5 3.5V13.5H0.5Z" fill="#f2f5fa" stroke="#a8a08a" stroke-width="1"/><path d="M7.5 0.5V3.5H10.5" fill="#dcc48a" stroke="#c4a866" stroke-width="0.8"/><rect x="2" y="2.5" width="3.2" height="0.9" fill="#6f8bc0" /><rect x="2" y="4.5" width="6" height="0.9" fill="#6f8bc0" /><rect x="2" y="6.5" width="6" height="0.9" fill="#6f8bc0" /><rect x="2" y="8.5" width="6" height="0.9" fill="#6f8bc0" /><rect x="2" y="10.5" width="4" height="0.9" fill="#6f8bc0" /></svg>
<svg style="left:114.0px;top:758.0px" width="47.0" height="46.0" viewBox="0 0 15 14.7" preserveAspectRatio="none"><path d="M0.5 0.5H6.5L9.5 3.5V14.2H0.5Z" fill="#eef2f8" stroke="#b1a37a" stroke-width="1"/><path d="M6.5 0.5V3.5H9.5" fill="#dcc48a" stroke="#c4a866" stroke-width="0.8"/><circle cx="11" cy="10.7" r="3.4" fill="#fff" stroke="#2a8a4a" stroke-width="0.9"/><circle cx="11" cy="10.7" r="1.8" fill="none" stroke="#2a8a4a" stroke-width="0.8"/><circle cx="11" cy="10.7" r="0.6" fill="#145a2a"/></svg>
<svg style="left:427px;top:21px" width="25" height="22" viewBox="0 0 25 22"><ellipse cx="12.5" cy="11" rx="10.5" ry="9.5" fill="none" stroke="#111" stroke-width="3"/><text x="12.5" y="15.5" text-anchor="middle" font-family="Liberation Sans" font-weight="bold" font-size="12" fill="#222">R</text></svg>
<div class="t" style="left:69.0px;top:17.0px;transform:scaleX(0.9851);color:#000">efx_hard_soc - Efinity</div>
<div class="t" style="left:464.2px;top:17.0px;transform:scaleX(0.9477);color:#000">RISC-V Embedded Software IDE</div>
<div class="t" style="left:17.9px;top:83.0px;transform:scaleX(1.0174);color:#000">File</div>
<div class="t" style="left:118.0px;top:83.0px;transform:scaleX(1.0085);color:#000">Edit</div>
<div class="t" style="left:224.9px;top:83.0px;transform:scaleX(1.0321);color:#000">Navigate</div>
<div class="t" style="left:417.0px;top:83.0px;transform:scaleX(0.9507);color:#000">Search</div>
<div class="t" style="left:569.0px;top:83.0px;transform:scaleX(1.0100);color:#000">Project</div>
<div class="t" style="left:729.1px;top:83.0px;transform:scaleX(0.9795);color:#000">Run</div>
<div class="t" style="left:840.0px;top:83.0px;transform:scaleX(1.0389);color:#000">Window</div>
<div class="t" style="left:1017.8px;top:83.0px;transform:scaleX(1.0756);color:#000">Help</div>
<div class="t" style="left:77.0px;top:246.0px;transform:scaleX(0.9861);color:#000">Debug</div>
<div class="t" style="left:280.1px;top:246.0px;transform:scaleX(0.9812);color:#000">Project Explorer</div>
<div class="t" style="left:127.0px;top:311.5px;transform:scaleX(1.0355);color:#000">gpioDemo</div>
<div class="t" style="left:173.9px;top:367.5px;transform:scaleX(1.0200);color:#000">Includes</div>
<div class="t" style="left:175.8px;top:423.5px;transform:scaleX(1.0993);color:#000">build</div>
<div class="t" style="left:177.0px;top:479.7px;transform:scaleX(1.0002);color:#000">co_debug</div>
<div class="t" style="left:177.1px;top:536.0px;transform:scaleX(0.9410);color:#000">src</div>
<div class="t" style="left:177.0px;top:592.2px;transform:scaleX(1.0091);color:#000">co_debug_gpioDemo_group.launch</div>
<div class="t" style="left:177.0px;top:648.0px;transform:scaleX(1.0181);color:#000">gpioDemo_ti_mc.launch</div>
<div class="t" style="left:177.0px;top:704.0px;transform:scaleX(1.0232);color:#000">gpioDemo_ti.launch</div>
<div class="t" style="left:175.9px;top:760.0px;transform:scaleX(1.0403);color:#000">makefile</div>
<!-- context menu shadow -->
<div class="r" style="left:695px;top:630px;width:953px;height:1525px;background:rgba(0,0,0,.017)"></div><div class="r" style="left:698px;top:633px;width:947px;height:1519px;background:rgba(0,0,0,.042)"></div><div class="r" style="left:701px;top:636px;width:941px;height:1513px;background:rgba(0,0,0,.123)"></div><div class="r" style="left:704px;top:639px;width:935px;height:1507px;background:rgba(0,0,0,.19)"></div><div class="r" style="left:707px;top:642px;width:929px;height:1501px;background:rgba(0,0,0,.167)"></div>
<div class="r" style="left:680px;top:614px;width:953px;height:1525px;background:#f2f2f2;box-sizing:border-box;border:3px solid #cdcdcd"></div>
<div id="menuseps"></div>
<div class="r" style="left:777px;top:702px;width:847px;height:3px;background:#d7d7d7"></div><div class="r" style="left:777px;top:999px;width:847px;height:3px;background:#d7d7d7"></div><div class="r" style="left:777px;top:1365px;width:847px;height:3px;background:#d7d7d7"></div><div class="r" style="left:777px;top:1525px;width:847px;height:3px;background:#d7d7d7"></div><div class="r" style="left:777px;top:1614px;width:847px;height:3px;background:#d7d7d7"></div><div class="r" style="left:777px;top:2050px;width:847px;height:3px;background:#d7d7d7"></div>
<!-- submenu shadow -->
<div class="r" style="left:1629px;top:1634px;width:778px;height:268px;background:rgba(0,0,0,.017)"></div><div class="r" style="left:1632px;top:1637px;width:772px;height:262px;background:rgba(0,0,0,.042)"></div><div class="r" style="left:1635px;top:1640px;width:766px;height:256px;background:rgba(0,0,0,.123)"></div><div class="r" style="left:1638px;top:1643px;width:760px;height:250px;background:rgba(0,0,0,.19)"></div><div class="r" style="left:1641px;top:1646px;width:754px;height:244px;background:rgba(0,0,0,.167)"></div>
<div class="r" style="left:1614px;top:1618px;width:778px;height:268px;background:#f2f2f2;box-sizing:border-box;border:3px solid #cdcdcd"></div>
<div class="r" style="left:1711px;top:1796px;width:672px;height:3px;background:#d7d7d7"></div>
<!-- highlights -->
<div class="r" style="left:692px;top:1626px;width:922px;height:70px;background:#98c8ee"></div>
<div class="r" style="left:1624px;top:1626px;width:750px;height:70px;background:#98c8ee"></div>
<!-- orange box -->
<div class="r" style="left:684px;top:1618px;width:1698px;height:86px;box-sizing:border-box;border:8px solid #f07124"></div>
<svg style="left:1580.0px;top:647.8px" width="15.0" height="22.0" viewBox="0 0 5 7" preserveAspectRatio="none"><path d="M0.6 0.5L4.3 3.5L0.6 6.5" stroke="#333" stroke-width="1.05" fill="none"/></svg>
<svg style="left:1580.0px;top:806.6px" width="15.0" height="22.0" viewBox="0 0 5 7" preserveAspectRatio="none"><path d="M0.6 0.5L4.3 3.5L0.6 6.5" stroke="#333" stroke-width="1.05" fill="none"/></svg>
<svg style="left:1580.0px;top:875.6px" width="15.0" height="22.0" viewBox="0 0 5 7" preserveAspectRatio="none"><path d="M0.6 0.5L4.3 3.5L0.6 6.5" stroke="#333" stroke-width="1.05" fill="none"/></svg>
<svg style="left:1580.0px;top:944.6px" width="15.0" height="22.0" viewBox="0 0 5 7" preserveAspectRatio="none"><path d="M0.6 0.5L4.3 3.5L0.6 6.5" stroke="#333" stroke-width="1.05" fill="none"/></svg>
<svg style="left:1580.0px;top:1650.4px" width="15.0" height="22.0" viewBox="0 0 5 7" preserveAspectRatio="none"><path d="M0.6 0.5L4.3 3.5L0.6 6.5" stroke="#333" stroke-width="1.05" fill="none"/></svg>
<svg style="left:1580.0px;top:1719.4px" width="15.0" height="22.0" viewBox="0 0 5 7" preserveAspectRatio="none"><path d="M0.6 0.5L4.3 3.5L0.6 6.5" stroke="#333" stroke-width="1.05" fill="none"/></svg>
<svg style="left:1580.0px;top:1787.4px" width="15.0" height="22.0" viewBox="0 0 5 7" preserveAspectRatio="none"><path d="M0.6 0.5L4.3 3.5L0.6 6.5" stroke="#333" stroke-width="1.05" fill="none"/></svg>
<svg style="left:1580.0px;top:1856.4px" width="15.0" height="22.0" viewBox="0 0 5 7" preserveAspectRatio="none"><path d="M0.6 0.5L4.3 3.5L0.6 6.5" stroke="#333" stroke-width="1.05" fill="none"/></svg>
<svg style="left:1580.0px;top:1925.0px" width="15.0" height="22.0" viewBox="0 0 5 7" preserveAspectRatio="none"><path d="M0.6 0.5L4.3 3.5L0.6 6.5" stroke="#333" stroke-width="1.05" fill="none"/></svg>
<svg style="left:702.0px;top:1024.0px" width="43.0" height="47.0" viewBox="0 0 14 15.2" preserveAspectRatio="none"><path d="M0.5 0.5H7L8.5 2V10.5H0.5Z" fill="#eaf1f8" stroke="#a69063" stroke-width="0.9"/><path d="M3.5 2H10.5L13.5 5V14.7H3.5Z" fill="#eff5fb" stroke="#998a66" stroke-width="1"/><rect x="5" y="4" width="3.5" height="0.9" fill="#6f8bbf" /><rect x="5" y="6" width="6" height="0.9" fill="#6f8bbf" /><rect x="5" y="8" width="6" height="0.9" fill="#6f8bbf" /><rect x="5" y="10" width="6" height="0.9" fill="#6f8bbf" /><rect x="5" y="12" width="4.2" height="0.9" fill="#6f8bbf" /></svg>
<svg style="left:705.0px;top:1093.0px" width="40.0" height="46.0" viewBox="0 0 13 15" preserveAspectRatio="none"><rect x="0.5" y="1.8" width="9.5" height="12.7" fill="#e4e4e4" stroke="#c4c4c4" stroke-width="0.9"/><rect x="3" y="0.3" width="4.5" height="2.4" fill="#dcdcdc"/><path d="M4.5 5.5H10.5L12.5 7.5V14.5H4.5Z" fill="#f4f4f4" stroke="#c4c4c4" stroke-width="0.9"/><rect x="6" y="8.5" width="2" height="0.8" fill="#d4d4d4" /><rect x="6" y="10.5" width="4" height="0.8" fill="#d4d4d4" /><rect x="6" y="12" width="4" height="0.8" fill="#d4d4d4" /></svg>
<svg style="left:705.0px;top:1161.0px" width="40.0" height="44.0" viewBox="0 0 13 14.2" preserveAspectRatio="none"><path d="M2.2 2.2L10.8 12M10.8 2.2L2.2 12" stroke="#e2484f" stroke-width="3.9" stroke-linecap="square"/></svg>
<svg style="left:699.0px;top:1394.0px" width="46.0" height="40.0" viewBox="0 0 14.8 12.8" preserveAspectRatio="none"><path d="M0.5 4.5H3V10.3H12V4.5H14.5V12.8H0.5Z" fill="#b6c4e0" stroke="#7d8fbf" stroke-width="0.9"/><path d="M3 0.5L8.5 6" stroke="#5a95c6" stroke-width="0.9" stroke-dasharray="1 0.5"/><path d="M6 6.8H9.5V3.3Z" fill="#4a86bb"/></svg>
<svg style="left:699.0px;top:1461.0px" width="46.0" height="41.0" viewBox="0 0 14.8 13" preserveAspectRatio="none"><path d="M0.5 4.5H3V10.3H12V4.5H14.5V12.8H0.5Z" fill="#b6c4e0" stroke="#7d8fbf" stroke-width="0.9"/><path d="M5 8L10.5 2.5" stroke="#5a95c6" stroke-width="0.9" stroke-dasharray="1 0.5"/><rect x="9.3" y="0.5" width="2.5" height="2.5" fill="#7aaad6"/></svg>
<svg style="left:702.0px;top:1548.0px" width="43.0" height="47.0" viewBox="0 0 14 15" preserveAspectRatio="none"><path d="M3.5 0.5H11L13.5 3V14.5H3.5Z" fill="#eff3fa" stroke="#aaa088" stroke-width="0.9"/><path d="M3 2.5C5 2.5 6 3.5 5 5.5L3.5 7.5C2 9.5 3.5 11 5.5 11" stroke="#e7b544" stroke-width="1.6" fill="none"/><path d="M1 3H4V1Z M7 10.5H3.5V13Z" fill="#e3ad35"/></svg>
<svg style="left:702.0px;top:1639.0px" width="43.0" height="43.0" viewBox="0 0 15 15" preserveAspectRatio="none"><circle cx="7.5" cy="7.5" r="7" fill="#3a9a45" stroke="#1c7a34" stroke-width="0.9"/><path d="M1.5 7.5A6 6 0 0 1 13.5 7.5" fill="#5cb45c" opacity="0.6"/><path d="M5.3 3.6L11 7.5L5.3 11.4Z" fill="#fff"/></svg>
<svg style="left:702.0px;top:1707.0px" width="47.0" height="48.0" viewBox="0 0 15 15" preserveAspectRatio="none"><g shape-rendering="crispEdges"><rect x="4" y="0" width="1.02" height="1.02" fill="#3f8f70"/><rect x="4" y="1" width="1.02" height="1.02" fill="#3f8f70"/><rect x="8" y="1" width="1.02" height="1.02" fill="#3f8f70"/><rect x="4" y="2" width="1.02" height="1.02" fill="#2f6a52"/><rect x="7" y="2" width="1.02" height="1.02" fill="#cfdcd6"/><rect x="8" y="2" width="1.02" height="1.02" fill="#3f8f70"/><rect x="3" y="3" width="1.02" height="1.02" fill="#62a6bd"/><rect x="4" y="3" width="1.02" height="1.02" fill="#2b86a6"/><rect x="5" y="3" width="1.02" height="1.02" fill="#2b86a6"/><rect x="6" y="3" width="1.02" height="1.02" fill="#cfdcd6"/><rect x="7" y="3" width="1.02" height="1.02" fill="#2f6a52"/><rect x="8" y="3" width="1.02" height="1.02" fill="#cfdcd6"/><rect x="0" y="4" width="1.02" height="1.02" fill="#3f8f70"/><rect x="1" y="4" width="1.02" height="1.02" fill="#3f8f70"/><rect x="2" y="4" width="1.02" height="1.02" fill="#2f6a52"/><rect x="3" y="4" width="1.02" height="1.02" fill="#2b86a6"/><rect x="4" y="4" width="1.02" height="1.02" fill="#e6f3c8"/><rect x="5" y="4" width="1.02" height="1.02" fill="#5c9c62"/><rect x="6" y="4" width="1.02" height="1.02" fill="#2b86a6"/><rect x="7" y="4" width="1.02" height="1.02" fill="#2b86a6"/><rect x="8" y="4" width="1.02" height="1.02" fill="#62a6bd"/><rect x="9" y="4" width="1.02" height="1.02" fill="#cfdcd6"/><rect x="10" y="4" width="1.02" height="1.02" fill="#2f6a52"/><rect x="11" y="4" width="1.02" height="1.02" fill="#2f6a52"/><rect x="12" y="4" width="1.02" height="1.02" fill="#cfdcd6"/><rect x="3" y="5" width="1.02" height="1.02" fill="#2b86a6"/><rect x="4" y="5" width="1.02" height="1.02" fill="#5c9c62"/><rect x="5" y="5" width="1.02" height="1.02" fill="#5c9c62"/><rect x="6" y="5" width="1.02" height="1.02" fill="#d6ead0"/><rect x="7" y="5" width="1.02" height="1.02" fill="#d6ead0"/><rect x="8" y="5" width="1.02" height="1.02" fill="#a9d29c"/><rect x="9" y="5" width="1.02" height="1.02" fill="#2b86a6"/><rect x="10" y="5" width="1.02" height="1.02" fill="#2b86a6"/><rect x="11" y="5" width="1.02" height="1.02" fill="#cfdcd6"/><rect x="12" y="5" width="1.02" height="1.02" fill="#3f8f70"/><rect x="13" y="5" width="1.02" height="1.02" fill="#3f8f70"/><rect x="3" y="6" width="1.02" height="1.02" fill="#cfdcd6"/><rect x="4" y="6" width="1.02" height="1.02" fill="#2b86a6"/><rect x="5" y="6" width="1.02" height="1.02" fill="#d6ead0"/><rect x="6" y="6" width="1.02" height="1.02" fill="#d6ead0"/><rect x="7" y="6" width="1.02" height="1.02" fill="#d6ead0"/><rect x="8" y="6" width="1.02" height="1.02" fill="#d6ead0"/><rect x="9" y="6" width="1.02" height="1.02" fill="#a9d29c"/><rect x="10" y="6" width="1.02" height="1.02" fill="#2b86a6"/><rect x="11" y="6" width="1.02" height="1.02" fill="#cfdcd6"/><rect x="2" y="7" width="1.02" height="1.02" fill="#cfdcd6"/><rect x="3" y="7" width="1.02" height="1.02" fill="#2f6a52"/><rect x="4" y="7" width="1.02" height="1.02" fill="#2b86a6"/><rect x="5" y="7" width="1.02" height="1.02" fill="#d6ead0"/><rect x="6" y="7" width="1.02" height="1.02" fill="#d6ead0"/><rect x="7" y="7" width="1.02" height="1.02" fill="#a9d29c"/><rect x="8" y="7" width="1.02" height="1.02" fill="#d6ead0"/><rect x="9" y="7" width="1.02" height="1.02" fill="#a9d29c"/><rect x="10" y="7" width="1.02" height="1.02" fill="#a9d29c"/><rect x="11" y="7" width="1.02" height="1.02" fill="#2b86a6"/><rect x="1" y="8" width="1.02" height="1.02" fill="#3f8f70"/><rect x="2" y="8" width="1.02" height="1.02" fill="#3f8f70"/><rect x="3" y="8" width="1.02" height="1.02" fill="#cfdcd6"/><rect x="4" y="8" width="1.02" height="1.02" fill="#62a6bd"/><rect x="5" y="8" width="1.02" height="1.02" fill="#a9d29c"/><rect x="6" y="8" width="1.02" height="1.02" fill="#d6ead0"/><rect x="7" y="8" width="1.02" height="1.02" fill="#d6ead0"/><rect x="8" y="8" width="1.02" height="1.02" fill="#5c9c62"/><rect x="9" y="8" width="1.02" height="1.02" fill="#a9d29c"/><rect x="10" y="8" width="1.02" height="1.02" fill="#a9d29c"/><rect x="11" y="8" width="1.02" height="1.02" fill="#2b86a6"/><rect x="12" y="8" width="1.02" height="1.02" fill="#2f6a52"/><rect x="13" y="8" width="1.02" height="1.02" fill="#2f6a52"/><rect x="14" y="8" width="1.02" height="1.02" fill="#cfdcd6"/><rect x="4" y="9" width="1.02" height="1.02" fill="#cfdcd6"/><rect x="5" y="9" width="1.02" height="1.02" fill="#2b86a6"/><rect x="6" y="9" width="1.02" height="1.02" fill="#a9d29c"/><rect x="7" y="9" width="1.02" height="1.02" fill="#a9d29c"/><rect x="8" y="9" width="1.02" height="1.02" fill="#a9d29c"/><rect x="9" y="9" width="1.02" height="1.02" fill="#5c9c62"/><rect x="10" y="9" width="1.02" height="1.02" fill="#a9d29c"/><rect x="11" y="9" width="1.02" height="1.02" fill="#2b86a6"/><rect x="13" y="9" width="1.02" height="1.02" fill="#cfdcd6"/><rect x="14" y="9" width="1.02" height="1.02" fill="#3f8f70"/><rect x="4" y="10" width="1.02" height="1.02" fill="#2f6a52"/><rect x="5" y="10" width="1.02" height="1.02" fill="#62a6bd"/><rect x="6" y="10" width="1.02" height="1.02" fill="#2b86a6"/><rect x="7" y="10" width="1.02" height="1.02" fill="#5c9c62"/><rect x="8" y="10" width="1.02" height="1.02" fill="#a9d29c"/><rect x="9" y="10" width="1.02" height="1.02" fill="#a9d29c"/><rect x="10" y="10" width="1.02" height="1.02" fill="#2b86a6"/><rect x="11" y="10" width="1.02" height="1.02" fill="#62a6bd"/><rect x="4" y="11" width="1.02" height="1.02" fill="#2f6a52"/><rect x="5" y="11" width="1.02" height="1.02" fill="#cfdcd6"/><rect x="6" y="11" width="1.02" height="1.02" fill="#cfdcd6"/><rect x="7" y="11" width="1.02" height="1.02" fill="#62a6bd"/><rect x="8" y="11" width="1.02" height="1.02" fill="#2b86a6"/><rect x="9" y="11" width="1.02" height="1.02" fill="#2b86a6"/><rect x="10" y="11" width="1.02" height="1.02" fill="#62a6bd"/><rect x="4" y="12" width="1.02" height="1.02" fill="#cfdcd6"/><rect x="5" y="12" width="1.02" height="1.02" fill="#3f8f70"/><rect x="8" y="12" width="1.02" height="1.02" fill="#2f6a52"/><rect x="5" y="13" width="1.02" height="1.02" fill="#3f8f70"/><rect x="8" y="13" width="1.02" height="1.02" fill="#2f6a52"/><rect x="9" y="13" width="1.02" height="1.02" fill="#cfdcd6"/><rect x="5" y="14" width="1.02" height="1.02" fill="#cfdcd6"/><rect x="8" y="14" width="1.02" height="1.02" fill="#cfdcd6"/><rect x="9" y="14" width="1.02" height="1.02" fill="#3f8f70"/></g></svg>
<svg style="left:698.0px;top:1980.0px" width="51.0" height="53.0" viewBox="0 0 16.3 17" preserveAspectRatio="none"><path d="M3.5 0.5V2.5M6.5 0.5V2.5M0.5 4H2.5M0.5 6.5H2.5" stroke="#2a5ea8" stroke-width="1"/><circle cx="5" cy="5" r="3.4" fill="#a9c3ea" stroke="#2f5fa6" stroke-width="1"/><path d="M11.5 0.5L12.8 2.7L15.5 3.5L13.6 5.5L14 8L11.5 7L9 8L9.4 5.5L7.5 3.5L10.2 2.7Z" fill="#f6e2a0" stroke="#c0902a" stroke-width="0.7"/><path d="M2 13.5L9 6.5L11.5 9L4.5 16Z" fill="#b9b2b8" stroke="#7c6a5a" stroke-width="0.7"/><path d="M0.3 16.5L2.5 12.5L4.5 15Z" fill="#fff3b0" stroke="#f0a030" stroke-width="0.6"/></svg>
<svg style="left:1642.0px;top:1649.0px" width="41.0" height="37.0" viewBox="0 0 13.2 12" preserveAspectRatio="none"><rect x="3.5" y="0.5" width="8" height="6.5" fill="#b8dcf3" stroke="#2c5f92" stroke-width="1"/><rect x="0.5" y="3.5" width="8" height="6.5" fill="#b8dcf3" stroke="#2c5f92" stroke-width="1"/><path d="M8.5 4.3V11.7L13 8Z" fill="#4fae5e" stroke="#1e7a3c" stroke-width="0.8"/></svg>
<svg style="left:1636.0px;top:1730.0px" width="44.0" height="44.0" viewBox="0 0 14 14" preserveAspectRatio="none"><path d="M3 1H13L11 13H1Z" fill="#edf0f4" stroke="#a7acb4" stroke-width="0.9"/><rect x="5" y="3" width="5" height="0.8" fill="#8aa0c4" /><rect x="4.6" y="5" width="5" height="0.8" fill="#8aa0c4" /><rect x="4.3" y="7" width="5" height="0.8" fill="#8aa0c4" /><rect x="4" y="9" width="5" height="0.8" fill="#8aa0c4" /><path d="M0.5 13.5H10.5" stroke="#9aa6b8" stroke-width="1.4"/><path d="M12 1L13.5 0.5" stroke="#d8c48a" stroke-width="1"/></svg>
<div class="t" style="left:788.7px;top:639.8px;transform:scaleX(0.9962);color:#000">New</div>
<div class="t" style="left:790.7px;top:729.8px;transform:scaleX(0.9962);color:#000">Open</div>
<div class="t" style="left:1525.6px;top:729.8px;transform:scaleX(0.9962);color:#000">F3</div>
<div class="t" style="left:790.7px;top:798.6px;transform:scaleX(0.9962);color:#000">Open With</div>
<div class="t" style="left:790.7px;top:867.6px;transform:scaleX(0.9962);color:#000">Show In</div>
<div class="t" style="left:1362.0px;top:867.6px;transform:scaleX(1.0490);color:#000">Alt+Shift+W</div>
<div class="t" style="left:790.7px;top:936.6px;transform:scaleX(0.9962);color:#000">Show in Local Terminal</div>
<div class="t" style="left:790.7px;top:1027.3px;transform:scaleX(0.9962);color:#000">Copy</div>
<div class="t" style="left:1462.2px;top:1027.3px;transform:scaleX(0.9962);color:#000">Ctrl+C</div>
<div class="t" style="left:788.7px;top:1095.7px;transform:scaleX(0.9962);color:#7b7b7b">Paste</div>
<div class="t" style="left:1463.2px;top:1095.7px;transform:scaleX(0.9962);color:#7b7b7b">Ctrl+V</div>
<div class="t" style="left:788.7px;top:1164.7px;transform:scaleX(0.9962);color:#000">Delete</div>
<div class="t" style="left:1462.0px;top:1164.7px;transform:scaleX(0.9962);color:#000">Delete</div>
<div class="t" style="left:788.7px;top:1232.7px;transform:scaleX(0.9962);color:#000">Move...</div>
<div class="t" style="left:788.7px;top:1301.7px;transform:scaleX(0.9962);color:#000">Rename...</div>
<div class="t" style="left:1525.6px;top:1301.7px;transform:scaleX(0.9962);color:#000">F2</div>
<div class="t" style="left:788.7px;top:1393.0px;transform:scaleX(0.9962);color:#000">Import...</div>
<div class="t" style="left:788.7px;top:1461.0px;transform:scaleX(0.9962);color:#000">Export...</div>
<div class="t" style="left:788.7px;top:1551.7px;transform:scaleX(0.9962);color:#000">Refresh</div>
<div class="t" style="left:788.7px;top:1642.4px;transform:scaleX(0.9962);color:#000">Run As</div>
<div class="t" style="left:788.7px;top:1711.4px;transform:scaleX(0.9962);color:#000">Debug As</div>
<div class="t" style="left:791.7px;top:1779.4px;transform:scaleX(0.9962);color:#000">Team</div>
<div class="t" style="left:790.7px;top:1848.4px;transform:scaleX(0.9962);color:#000">Compare With</div>
<div class="t" style="left:788.7px;top:1917.0px;transform:scaleX(0.9962);color:#000">Replace With</div>
<div class="t" style="left:788.7px;top:1986.0px;transform:scaleX(0.9962);color:#000">Run C/C++ Code Analysis</div>
<div class="t" style="left:788.7px;top:2076.2px;transform:scaleX(0.9962);color:#000">Properties</div>
<div class="t" style="left:1414.7px;top:2076.2px;transform:scaleX(0.9962);color:#000">Alt+Enter</div>
<div class="t" style="left:1723.0px;top:1643.7px;transform:scaleX(0.9975);color:#000">1 co_debug_gpioDemo_group</div>
<div class="t" style="left:1724.1px;top:1732.6px;transform:scaleX(0.9054);color:#000">2 EASE Script</div>
<div class="t" style="left:1721.9px;top:1823.0px;transform:scaleX(1.0196);color:#000">Run Configurations...</div>
</body></html>
